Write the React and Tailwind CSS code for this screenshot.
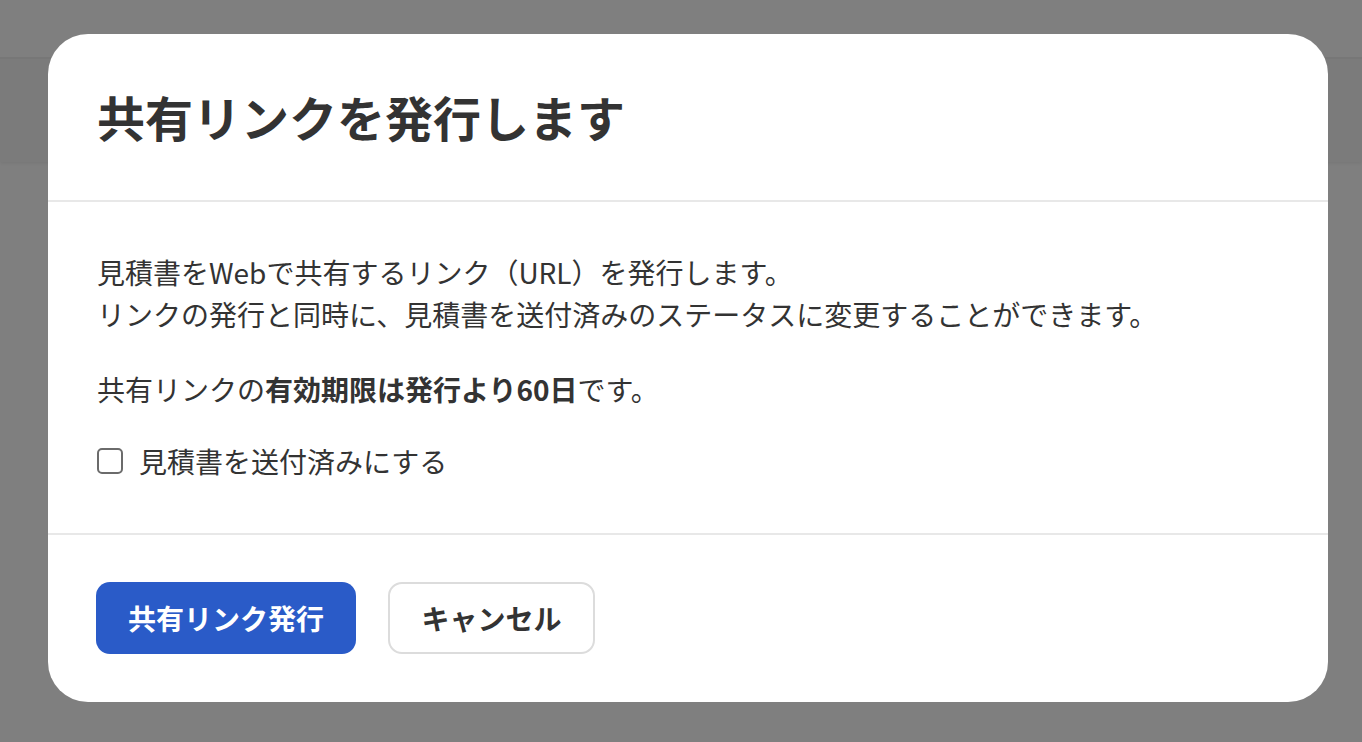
import { useState } from "react";

const font = { fontFamily: '"Noto Sans CJK JP", "Noto Sans", sans-serif' };

const ShareLinkModal = () => {
  const [sent, setSent] = useState(false);

  return (
    <div className="w-[1280px] h-[668px] bg-white rounded-[40px] flex flex-col text-[#333]">
      <header className="h-[168px] pl-[49px] pb-[3px] flex items-center border-b-2 border-[#e8e8e8]">
        <h2 className="text-[48px] font-bold leading-none">共有リンクを発行します</h2>
      </header>

      <section className="flex-1 px-[49px] pt-[49px] text-[28px] leading-[42px]">
        <p>
          見積書をWebで共有するリンク（URL）を発行します。
          <br />
          リンクの発行と同時に、見積書を送付済みのステータスに変更することができます。
        </p>
        <p className="mt-[33px]">
          共有リンクの<span className="font-bold">有効期限は発行より60日</span>です。
        </p>
        <label className="mt-[30px] flex items-center gap-[16px] cursor-pointer">
          <span
            className={
              sent
                ? "w-[26px] h-[26px] rounded-[5px] border-2 border-[#2a5bc8] bg-[#2a5bc8]"
                : "w-[26px] h-[26px] rounded-[5px] border-2 border-[#6b6b6b] bg-white"
            }
            onClick={() => setSent(!sent)}
          />
          <span>見積書を送付済みにする</span>
        </label>
      </section>

      <footer className="h-[169px] px-[48px] pb-[2px] flex items-center gap-[32px] border-t-2 border-[#e8e8e8]">
        <button className="w-[260px] h-[72px] rounded-[14px] bg-[#2a5bc8] text-white text-[28px] font-bold">
          共有リンク発行
        </button>
        <button className="w-[207px] h-[72px] rounded-[14px] border-2 border-[#dcdcdc] bg-white text-[#333] text-[28px] font-bold">
          キャンセル
        </button>
      </footer>
    </div>
  );
};

export default function App() {
  return (
    <div className="relative h-[742px] w-full overflow-hidden bg-white" style={font}>
      <div className="h-[59px] border-b-2 border-[#eeeeee] bg-white" />
      <div className="h-[103px] bg-[#f6f6f6] shadow-[0_2px_3px_rgba(0,0,0,0.06)]" />

      <div className="absolute inset-0 bg-black/50 flex justify-start pl-[48px] pt-[34px]">
        <ShareLinkModal />
      </div>
    </div>
  );
}
